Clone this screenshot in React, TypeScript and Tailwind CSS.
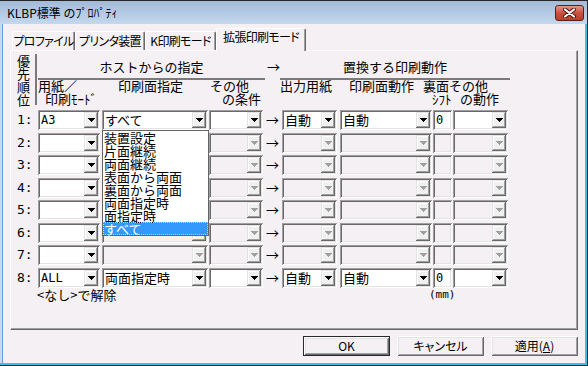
import React from "react";

const SUNKEN =
  "shadow-[inset_1px_1px_0_#a0a0a0,inset_-1px_-1px_0_#ffffff,inset_2px_2px_0_#696969,inset_-2px_-2px_0_#e3e3e3]";
const CBTN =
  "shadow-[inset_-1px_-1px_0_#696969,inset_1px_1px_0_#e3e3e3,inset_-2px_-2px_0_#a0a0a0,inset_2px_2px_0_#ffffff]";
const BTN =
  "shadow-[inset_1px_1px_0_#ffffff,inset_-1px_-1px_0_#696969,inset_2px_2px_0_#e3e3e3,inset_-2px_-2px_0_#a0a0a0]";

function DropArrow({ disabled }: { disabled?: boolean }) {
  return (
    <svg width="7" height="4" viewBox="0 0 7 4" shapeRendering="crispEdges">
      <path
        d="M0 0h7v1h-1v1h-1v1h-1v1h-1v-1h-1v-1h-1v-1h-1z"
        fill={disabled ? "#a0a0a0" : "#000000"}
      />
    </svg>
  );
}

function Combo({
  width,
  text,
  disabled,
  mono,
  className,
  children,
}: {
  width: string;
  text?: string;
  disabled?: boolean;
  mono?: boolean;
  className?: string;
  children?: React.ReactNode;
}) {
  return (
    <div
      className={`relative flex h-[20px] shrink-0 items-center ${width} ${
        disabled ? "bg-[#f4f0f4]" : "bg-white"
      } ${SUNKEN} ${className ?? ""}`}
    >
      <span
        className={`flex-1 whitespace-nowrap pl-[3px] ${
          mono ? "font-['DejaVu_Sans_Mono',monospace] text-[12px]" : "text-[13px]"
        } leading-[16px]`}
      >
        {text}
      </span>
      <div
        className={`mr-[2px] flex h-[16px] w-[14px] shrink-0 items-center justify-center bg-[#f0f0f0] ${CBTN}`}
      >
        <DropArrow disabled={disabled} />
      </div>
      {children}
    </div>
  );
}

function Edit({ text, disabled }: { text?: string; disabled?: boolean }) {
  return (
    <div
      className={`ml-[1px] flex h-[20px] w-[19px] shrink-0 items-center pl-[3px] font-['DejaVu_Sans_Mono',monospace] text-[12px] leading-[16px] ${
        disabled ? "bg-[#f4f0f4]" : "bg-white"
      } ${SUNKEN}`}
    >
      {text}
    </div>
  );
}

const listItems = [
  "装置設定",
  "片面継続",
  "両面継続",
  "表面から両面",
  "裏面から両面",
  "両面指定時",
  "面指定時",
  "すべて",
];

function DropList() {
  return (
    <div className="absolute left-0 top-[20px] z-20 w-[107px] border border-[#646464] bg-white">
      {listItems.map((t, i) => (
        <div
          key={i}
          className={`h-[13px] whitespace-nowrap pl-[1px] text-[13px] leading-[13px] ${
            i === 7
              ? "bg-[#3399ff] text-white outline-1 outline-dotted outline-[#e8d08a] -outline-offset-1"
              : ""
          }`}
        >
          {t}
        </div>
      ))}
    </div>
  );
}

type RowData = {
  n: number;
  c1: string;
  c2?: string;
  c4?: string;
  c5?: string;
  edit?: string;
  active: boolean;
  list?: boolean;
};

const rows: RowData[] = [
  { n: 1, c1: "A3", c2: "すべて", c4: "自動", c5: "自動", edit: "0", active: true, list: true },
  { n: 2, c1: "", active: false },
  { n: 3, c1: "", active: false },
  { n: 4, c1: "", active: false },
  { n: 5, c1: "", active: false },
  { n: 6, c1: "", active: false },
  { n: 7, c1: "", active: false },
  { n: 8, c1: "ALL", c2: "両面指定時", c4: "自動", c5: "自動", edit: "0", active: true },
];

function Row({ r }: { r: RowData }) {
  const d = !r.active;
  return (
    <div className="flex h-[20px] items-center">
      <div className="w-[21px] font-['DejaVu_Sans_Mono',monospace] text-[13px] leading-[16px]">
        {r.n}:
      </div>
      <Combo width="w-[62px]" text={r.c1} mono />
      <Combo width="w-[106px]" className="ml-[2px]" text={r.c2} disabled={d}>
        {r.list ? <DropList /> : null}
      </Combo>
      <Combo width="w-[54px]" className="ml-[1px]" disabled={d} />
      <div className="w-[19px] text-center text-[13px] leading-[16px]">→</div>
      <Combo width="w-[55px]" text={r.c4} disabled={d} />
      <Combo width="w-[92px]" className="ml-[3px]" text={r.c5} disabled={d} />
      <Edit text={r.edit} disabled={d} />
      <Combo width="w-[55px]" className="ml-[1px]" disabled={d} />
    </div>
  );
}

function Tab({
  width,
  selected,
  children,
}: {
  width: string;
  selected?: boolean;
  children: React.ReactNode;
}) {
  return (
    <div
      className={`flex shrink-0 justify-center whitespace-nowrap rounded-t-[2px] border-l border-t border-r border-l-white border-t-white border-r-[#696969] ${width} ${
        selected
          ? "relative z-10 -mb-[1px] h-[23px] bg-[#f4f0f4] pt-[1px]"
          : "h-[19px] pt-[2px]"
      } shadow-[inset_-1px_0_0_#a0a0a0] text-[12px] leading-[14px] tracking-[-0.7px] [font-feature-settings:'palt']`}
    >
      {children}
    </div>
  );
}

function Button({ def, children }: { def?: boolean; children: React.ReactNode }) {
  return (
    <div
      className={`flex h-[20px] w-[87px] items-center justify-center whitespace-nowrap bg-[#f4f0f4] text-[12px] leading-[14px] [font-feature-settings:'palt'] ${BTN} ${
        def ? "border border-[#2a2a2a]" : ""
      }`}
    >
      {children}
    </div>
  );
}

export default function App() {
  return (
    <div className="flex h-[366px] w-[588px] flex-col overflow-hidden border-b border-r border-t border-[#262626] bg-[#f4f0f4] font-['Noto_Sans_CJK_JP',sans-serif] text-black">
      {/* title bar */}
      <div className="flex h-[23px] shrink-0 items-center bg-linear-to-b from-[#a3bad8] to-[#c4d8ee] pl-[7px]">
        <span className="whitespace-nowrap text-[12px] leading-[14px]">KLBP標準 のﾌﾟﾛﾊﾟﾃｨ</span>
        <div className="ml-auto mr-[3px] mt-[1px] flex h-[16px] w-[29px] items-center justify-center rounded-[3px] border border-[#5e1c12] bg-linear-to-b from-[#df9a8c] via-[#c94f3e] to-[#b9402c]">
          <svg width="13" height="10" viewBox="0 0 13 10">
            <path d="M2 1.5L11 8.5M11 1.5L2 8.5" stroke="#4a140c" strokeWidth="4" strokeLinecap="round" />
            <path d="M2 1.5L11 8.5M11 1.5L2 8.5" stroke="#ffffff" strokeWidth="2.2" strokeLinecap="round" />
          </svg>
        </div>
      </div>

      <div className="flex flex-1">
        {/* left frame */}
        <div className="w-[3px] border-r border-[#6a9fd6] bg-[#c6d9ef]" />

        {/* body */}
        <div className="flex flex-1 flex-col pt-[4px]">
          {/* tabs */}
          <div className="flex h-[22px] items-end pl-[9px]">
            <Tab width="w-[63px]">プロファイル</Tab>
            <Tab width="w-[70px]">プリンタ装置</Tab>
            <Tab width="w-[71px]">K印刷モード</Tab>
            <Tab width="w-[90px]" selected>
              拡張印刷モード
            </Tab>
          </div>

          {/* panel */}
          <div className="mx-[7px] h-[280px] border border-b-[#696969] border-l-white border-r-[#696969] border-t-white pl-[6px] pt-[2px] shadow-[inset_-1px_-1px_0_#a0a0a0]">
            {/* header */}
            <div className="flex">
              <div className="flex w-[18px] flex-col pt-[1px] text-[13px] leading-[13px]">
                <span className="h-[13px]">優</span>
                <span className="h-[13px]">先</span>
                <span className="h-[13px]">順</span>
                <span className="h-[13px]">位</span>
              </div>
              <div className="my-[1px] w-[2px] bg-[#7a7a7a]" />
              <div className="ml-[1px] flex flex-col">
                <div className="flex h-[25px] items-center whitespace-nowrap pt-[2px] text-[13px] leading-[13px]">
                  <div className="w-[227px] text-center">ホストからの指定</div>
                  <div className="w-[15px] text-right">→</div>
                  <div className="w-[230px] text-center">置換する印刷動作</div>
                </div>
                <div className="flex h-[2px]">
                  <div className="w-[227px] bg-[#7a7a7a]" />
                  <div className="w-[15px]" />
                  <div className="w-[230px] bg-[#7a7a7a]" />
                </div>
                <div className="flex h-[12px] whitespace-nowrap text-[13px] leading-[12px]">
                  <div className="w-[80px]">用紙／</div>
                  <div className="w-[92px]">印刷面指定</div>
                  <div className="w-[70px]">その他</div>
                  <div className="w-[69px]">出力用紙</div>
                  <div className="w-[74px]">印刷面動作</div>
                  <div>裏面その他</div>
                </div>
                <div className="flex h-[13px] whitespace-nowrap text-[13px] leading-[13px]">
                  <div className="w-[184px] pl-[7px]">印刷ﾓｰﾄﾞ</div>
                  <div className="w-[210px]">の条件</div>
                  <div className="w-[28px]">ｼﾌﾄ</div>
                  <div>の動作</div>
                </div>
              </div>
            </div>

            {/* rows */}
            <div className="mt-[4px] flex flex-col gap-[2.5px]">
              {rows.map((r) => (
                <Row key={r.n} r={r} />
              ))}
            </div>
            <div className="flex h-[13px] whitespace-nowrap text-[13px] leading-[13px]">
              <span className="w-[412px] pl-[20px]">&lt;なし&gt;で解除</span>
              <span className="font-['DejaVu_Sans_Mono',monospace] text-[11px]">(mm)</span>
            </div>
          </div>

          {/* buttons */}
          <div className="mt-[6px] flex justify-end gap-[7px] pr-[7px]">
            <Button def>OK</Button>
            <Button>キャンセル</Button>
            <Button>
              適用(<span className="underline">A</span>)
            </Button>
          </div>
        </div>

        {/* right frame */}
        <div className="w-[2px] bg-[#3cc0e8]" />
      </div>
      <div className="h-[2px] shrink-0 bg-[#3cc0e8]" />
    </div>
  );
}
